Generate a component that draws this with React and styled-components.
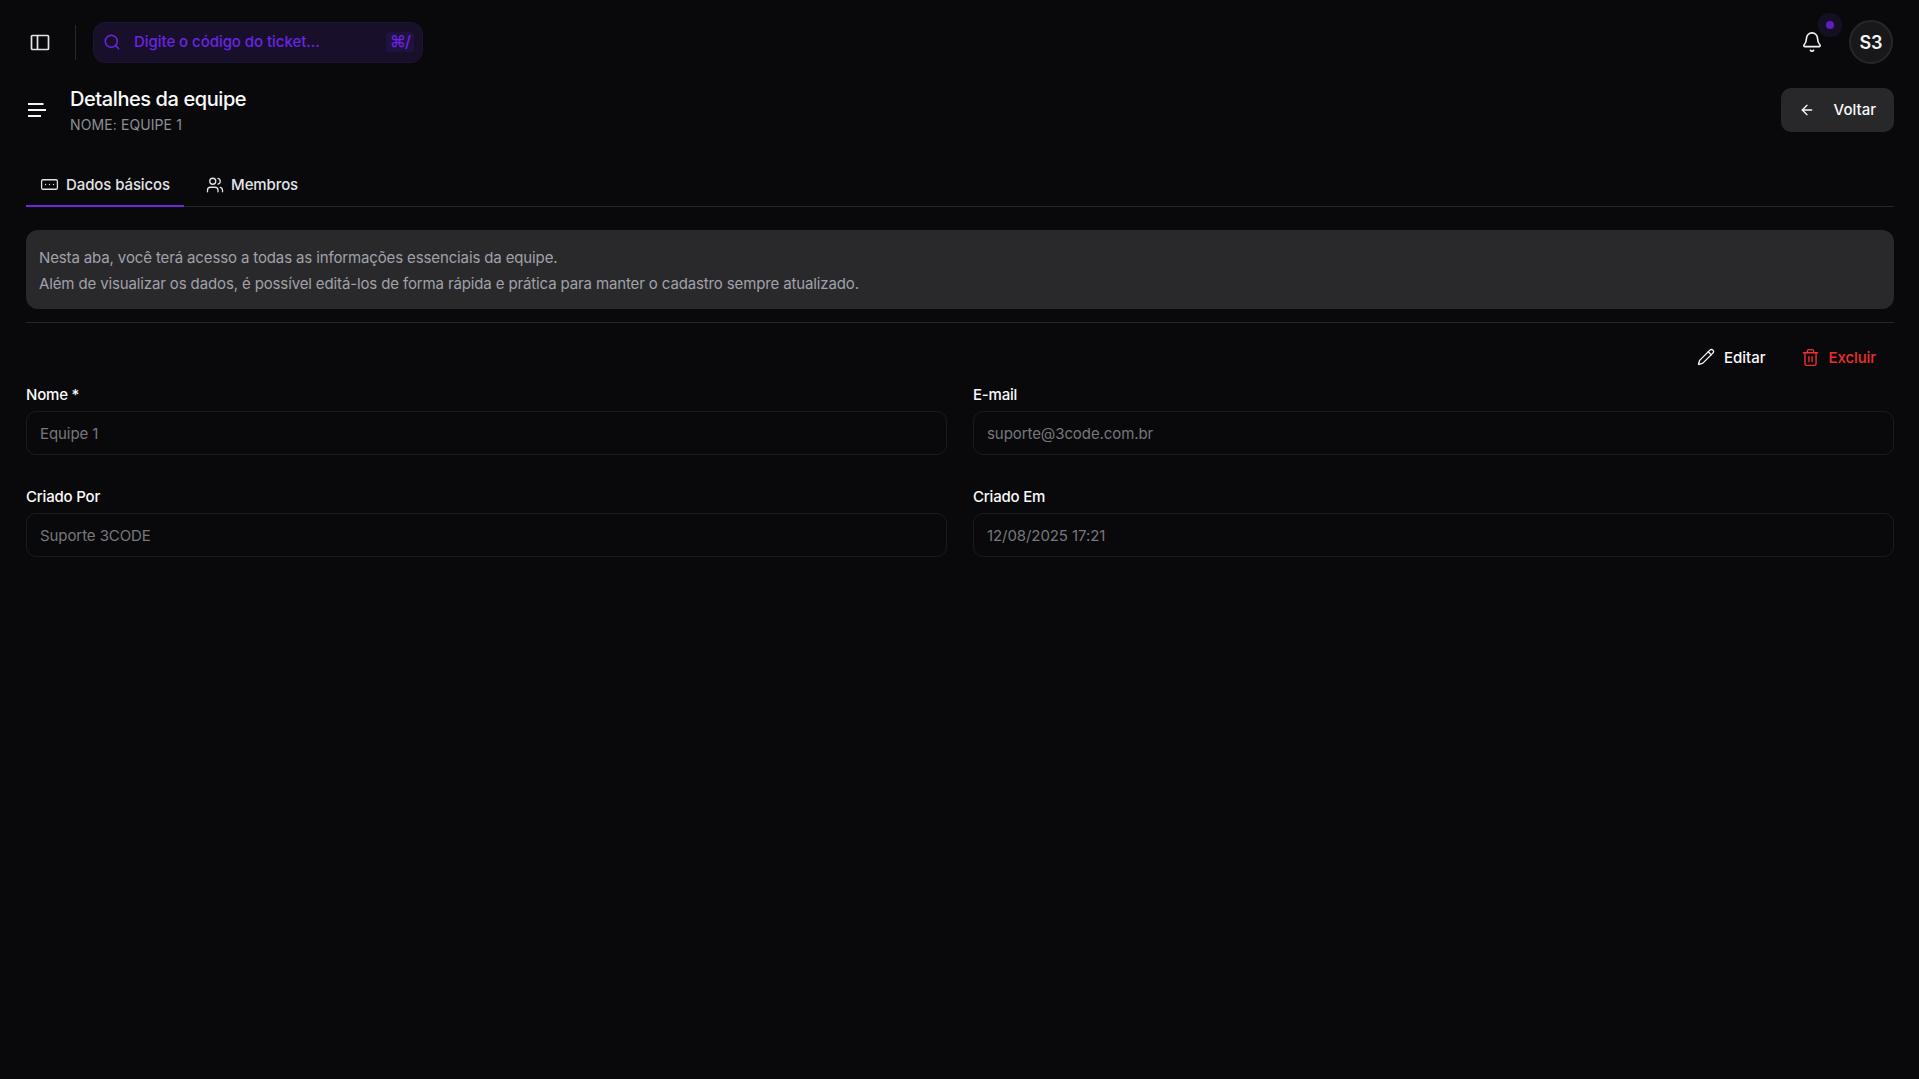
import styled, { createGlobalStyle } from "styled-components";
import { Search, Bell, ArrowLeft, RectangleEllipsis, Users, Pencil, Trash2 } from "lucide-react";

const GlobalStyle = createGlobalStyle`
  html, body {
    margin: 0;
    height: 100%;
    background: #09090b;
  }
  body {
    font-family: Inter, "Liberation Sans", sans-serif;
    color: #fafafa;
  }
  * {
    box-sizing: border-box;
  }
`;

const Page = styled.div`
  min-height: 1079px;
  background: #09090b;
  padding: 0 25px 0 26px;
`;

const TopBar = styled.header`
  height: 84px;
  display: flex;
  align-items: center;
`;

const IconSlot = styled.div`
  width: 28px;
  display: flex;
  justify-content: center;
  color: #e4e4e7;
`;

const VDivider = styled.div`
  width: 1px;
  height: 35px;
  margin: 0 17px 0 21px;
  background: #26272b;
`;

const SearchBox = styled.div`
  width: 330px;
  height: 41px;
  display: flex;
  align-items: center;
  padding: 0 8px 0 9px;
  gap: 13px;
  border-radius: 12px;
  border: 1px solid #1f1433;
  background: #180f2b;
  font-size: 15px;
  font-weight: 450;
  letter-spacing: -0.05px;
`;

const SearchText = styled.span`
  flex: 1;
  color: #6a25e0;
  padding-bottom: 1px;
`;

const Kbd = styled.span`
  width: 28px;
  height: 20px;
  padding-bottom: 2px;
  border-radius: 4px;
  background: #20123f;
  color: #6a25e0;
  font-size: 16px;
  letter-spacing: -1px;
  display: flex;
  align-items: center;
  justify-content: center;
`;

const TopRight = styled.div`
  margin-left: auto;
  margin-right: 1px;
  display: flex;
  align-items: center;
  gap: 26px;
`;

const BellWrap = styled.div`
  position: relative;
  display: flex;
  color: #f4f4f5;
`;

const Dot = styled.span`
  position: absolute;
  top: -10px;
  right: -11px;
  width: 8px;
  height: 8px;
  border-radius: 50%;
  background: #5b1fc4;
  box-shadow: 0 0 0 8px #150f24;
`;

const Avatar = styled.div`
  width: 44px;
  height: 44px;
  border-radius: 50%;
  background: #18181b;
  border: 2px solid #27272a;
  display: flex;
  align-items: center;
  justify-content: center;
  font-size: 18px;
  font-weight: 600;
  color: #f4f4f5;
`;

const TitleRow = styled.div`
  display: flex;
  align-items: center;
  height: 44px;
  margin-top: 4px;
`;

const MenuIcon = styled.div`
  width: 44px;
  display: flex;
  color: #f4f4f5;
`;

const TitleBlock = styled.div`
  display: flex;
  flex-direction: column;
  gap: 5px;
  margin-bottom: 2px;
`;

const Title = styled.h1`
  margin: 0;
  font-size: 20px;
  line-height: 26px;
  font-weight: 450;
  letter-spacing: -0.42px;
  color: #fafafa;
`;

const Subtitle = styled.span`
  font-size: 14px;
  line-height: 16px;
  letter-spacing: 0.1px;
  color: #8b8f98;
`;

const BackButton = styled.button`
  margin-left: auto;
  width: 113px;
  height: 44px;
  border: none;
  border-radius: 10px;
  background: #28282b;
  color: #fafafa;
  font: inherit;
  font-size: 15px;
  font-weight: 450;
  letter-spacing: 0;
  display: flex;
  align-items: center;
  padding: 0 18px 1px;
  justify-content: space-between;
`;

const Tabs = styled.nav`
  margin-top: 32px;
  height: 43px;
  display: flex;
  border-bottom: 1px solid #26272b;
`;

const Tab = styled.div`
  height: 43px;
  padding: 0 14px;
  margin-right: ${(props) => (props.$active ? "8px" : "0")};
  display: flex;
  align-items: center;
  gap: 7px;
  font-size: 15px;
  font-weight: 450;
  letter-spacing: -0.1px;
  color: #e4e4e7;
  border-bottom: 2px solid ${(props) => (props.$active ? "#6d28d9" : "transparent")};
`;

const InfoBox = styled.div`
  margin-top: 23px;
  height: 79px;
  padding: 2px 13px 0;
  border-radius: 12px;
  background: #29292c;
  color: #a1a1aa;
  font-size: 15px;
  line-height: 26px;
  letter-spacing: -0.13px;
  display: flex;
  flex-direction: column;
  justify-content: center;
`;

const HDivider = styled.div`
  height: 1px;
  margin-top: 13px;
  background: #26272b;
`;

const Actions = styled.div`
  height: 44px;
  margin-top: 12px;
  display: flex;
  justify-content: flex-end;
  align-items: center;
  gap: 35px;
  padding-right: 18px;
`;

const Action = styled.div`
  display: flex;
  align-items: center;
  gap: 9px;
  font-size: 15px;
  font-weight: 450;
  letter-spacing: ${(props) => (props.$danger ? "-0.1px" : "0")};
  color: ${(props) => (props.$danger ? "#ef2f2f" : "#fafafa")};
`;

const FormGrid = styled.div`
  margin-top: 6px;
  display: grid;
  grid-template-columns: 1fr 1fr;
  column-gap: 26px;
  row-gap: 32px;
`;

const Field = styled.div`
  display: flex;
  flex-direction: column;
  gap: 6px;
`;

const Label = styled.label`
  font-size: 15px;
  line-height: 20px;
  font-weight: 450;
  letter-spacing: -0.2px;
  color: #fafafa;
`;

const Input = styled.div`
  height: 44px;
  border: 1px solid #1b1b1e;
  border-radius: 10px;
  padding: 0 13px;
  display: flex;
  align-items: center;
  font-size: 15px;
  letter-spacing: -0.08px;
  color: #77777d;
`;

function SidebarIcon() {
  return (
    <svg width="20" height="17" viewBox="0 0 20 17" fill="none" stroke="currentColor" strokeWidth="1.7">
      <rect x="1.5" y="1.5" width="17" height="14" rx="1" />
      <path d="M7.5 1.5v14" />
    </svg>
  );
}

function MenuLines() {
  return (
    <svg width="20" height="16" viewBox="0 0 20 16" fill="none" stroke="currentColor" strokeWidth="2">
      <path d="M2 2h15.5M2 8h18M2 14h13" />
    </svg>
  );
}

export default function App() {
  return (
    <Page>
      <GlobalStyle />
      <TopBar>
        <IconSlot>
          <SidebarIcon />
        </IconSlot>
        <VDivider />
        <SearchBox>
          <Search size={18} color="#6a25e0" />
          <SearchText>Digite o código do ticket...</SearchText>
          <Kbd>⌘/</Kbd>
        </SearchBox>
        <TopRight>
          <BellWrap>
            <Bell size={22} strokeWidth={1.75} />
            <Dot />
          </BellWrap>
          <Avatar>S3</Avatar>
        </TopRight>
      </TopBar>
      <TitleRow>
        <MenuIcon>
          <MenuLines />
        </MenuIcon>
        <TitleBlock>
          <Title>Detalhes da equipe</Title>
          <Subtitle>NOME: EQUIPE 1</Subtitle>
        </TitleBlock>
        <BackButton>
          <ArrowLeft size={16} />
          Voltar
        </BackButton>
      </TitleRow>
      <Tabs>
        <Tab $active>
          <RectangleEllipsis size={19} strokeWidth={1.6} />
          Dados básicos
        </Tab>
        <Tab>
          <Users size={18} strokeWidth={1.75} />
          Membros
        </Tab>
      </Tabs>
      <InfoBox>
        <span>Nesta aba, você terá acesso a todas as informações essenciais da equipe.</span>
        <span>Além de visualizar os dados, é possível editá-los de forma rápida e prática para manter o cadastro sempre atualizado.</span>
      </InfoBox>
      <HDivider />
      <Actions>
        <Action>
          <Pencil size={18} strokeWidth={1.75} />
          Editar
        </Action>
        <Action $danger>
          <Trash2 size={19} strokeWidth={1.75} />
          Excluir
        </Action>
      </Actions>
      <FormGrid>
        <Field>
          <Label>Nome *</Label>
          <Input>Equipe 1</Input>
        </Field>
        <Field>
          <Label>E-mail</Label>
          <Input>suporte@3code.com.br</Input>
        </Field>
        <Field>
          <Label>Criado Por</Label>
          <Input>Suporte 3CODE</Input>
        </Field>
        <Field>
          <Label>Criado Em</Label>
          <Input>12/08/2025 17:21</Input>
        </Field>
      </FormGrid>
    </Page>
  );
}
